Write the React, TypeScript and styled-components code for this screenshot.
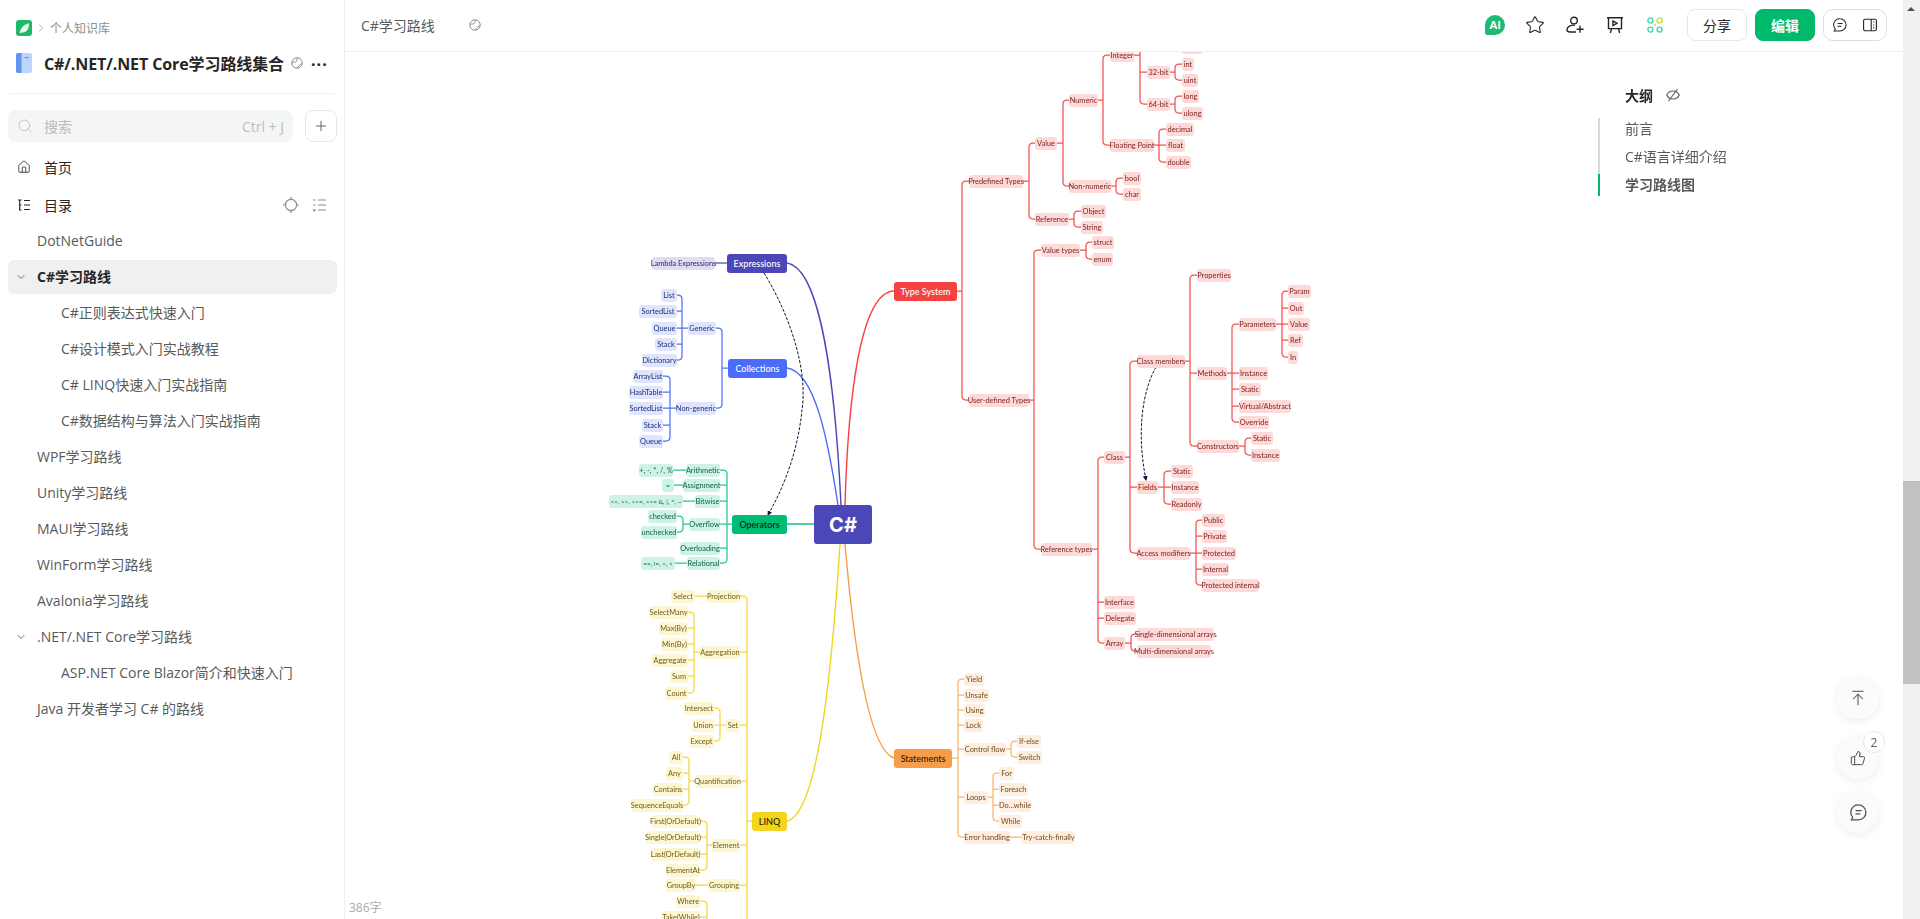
import React from "react"
import styled, { createGlobalStyle } from "styled-components"
import { ArrowUpToLine, ChevronDown, ChevronRight, House, Plus, Search, Star, ThumbsUp } from "lucide-react"

const GlobalStyle = createGlobalStyle`
  html, body {
    margin: 0;
    height: 100%;
    overflow: hidden;
    background: #fff;
    font-family: "Open Sans", "Noto Sans CJK SC", sans-serif;
  }
  #root { height: 100%; }
`

const Page = styled.div`
  display: flex;
  width: 1920px;
  height: 919px;
  overflow: hidden;
`

const Sidebar = styled.aside`
  flex: 0 0 345px;
  box-sizing: border-box;
  border-right: 1px solid #eff0f0;
  padding: 0 7px 0 8px;
  display: flex;
  flex-direction: column;
`

const Crumbs = styled.div`
  display: flex;
  align-items: center;
  height: 16px;
  margin: 20px 0 0 8px;
  font-size: 12px;
  color: #8a8f8d;
  gap: 3px;
`

const TitleRow = styled.div`
  display: flex;
  align-items: center;
  margin: 15px 0 0 8px;
  height: 24px;
`

const BookTitle = styled.div`
  font-size: 16px;
  font-weight: 700;
  color: #262626;
  margin-left: 12px;
  white-space: nowrap;
  letter-spacing: -0.1px;
`

const TitleScope = styled.span`
  margin-left: 7px;
  display: flex;
`

const TitleDots = styled.div`
  margin-left: 8px;
  font-size: 16px;
  font-weight: 700;
  letter-spacing: 1px;
  color: #262626;
  line-height: 16px;
  transform: translateY(-3px);
`

const Divider = styled.div`
  height: 1px;
  background: #eff0f0;
  margin: 18px 2px 0 2px;
`

const SearchRow = styled.div`
  display: flex;
  gap: 12px;
  margin-top: 16px;
`

const SearchBox = styled.div`
  flex: 0 0 285px;
  height: 32px;
  box-sizing: border-box;
  background: #f4f5f5;
  border-radius: 8px;
  display: flex;
  align-items: center;
  padding: 0 9px;
  color: #bbbfbd;
  font-size: 14px;
`

const SearchLabel = styled.span`
  margin-left: 11px;
  flex: 1;
  color: #b8bbba;
`

const AddButton = styled.button`
  flex: 0 0 32px;
  height: 32px;
  padding: 0;
  background: #fff;
  border: 1px solid #e7e9e8;
  border-radius: 8px;
  color: #585a5a;
  display: flex;
  align-items: center;
  justify-content: center;
`

const NavRow = styled.div<{ $top: number }>`
  display: flex;
  align-items: center;
  height: 36px;
  margin-top: ${(p) => p.$top}px;
  padding: 0 9px;
  color: #262626;
  font-size: 14px;
  gap: 13px;
`

const NavTools = styled.div`
  margin-left: auto;
  display: flex;
  align-items: center;
  gap: 13px;
  color: #8a8f8d;
  margin-right: 1px;
`

const TreeList = styled.div`
  display: flex;
  flex-direction: column;
`

const TreeRow = styled.div<{ $level: number; $active?: boolean }>`
  position: relative;
  height: 34px;
  margin: 1px 0;
  box-sizing: border-box;
  padding: 0 0 2px ${(p) => (p.$level === 2 ? 53 : 29)}px;
  display: flex;
  align-items: center;
  font-size: 14px;
  color: ${(p) => (p.$active ? "#262626" : "#585a5a")};
  font-weight: ${(p) => (p.$active ? 700 : 400)};
  background: ${(p) => (p.$active ? "#eff0f0" : "transparent")};
  border-radius: 6px;
  white-space: nowrap;
`

const Caret = styled.span`
  position: absolute;
  left: 7px;
  top: 11px;
  display: flex;
  color: #3d3f3f;
`

const Main = styled.main`
  flex: 1;
  min-width: 0;
  display: flex;
  flex-direction: column;
`

const Header = styled.header`
  flex: 0 0 52px;
  box-sizing: border-box;
  border-bottom: 1px solid #eff0f0;
  display: flex;
  align-items: center;
  padding: 0 16px 1px 16px;
  background: #fff;
  position: relative;
  z-index: 2;
`

const DocName = styled.div`
  font-size: 14px;
  color: #585a5a;
  margin-right: 34px;
`

const HeaderIcons = styled.div`
  margin-left: auto;
  display: flex;
  align-items: center;
  gap: 20px;
  margin-right: 22px;
  color: #262626;
`

const IconSlot = styled.span`
  width: 20px;
  height: 20px;
  display: flex;
  align-items: center;
  justify-content: center;
`

const HeaderButton = styled.button<{ $primary?: boolean }>`
  width: 60px;
  height: 32px;
  box-sizing: border-box;
  padding: 0;
  border-radius: 8px;
  margin-right: 8px;
  font-family: inherit;
  font-size: 14px;
  font-weight: ${(p) => (p.$primary ? 700 : 400)};
  color: ${(p) => (p.$primary ? "#fff" : "#262626")};
  background: ${(p) => (p.$primary ? "#00b96b" : "#fff")};
  border: 1px solid ${(p) => (p.$primary ? "#00b96b" : "#e7e9e8")};
`

const ButtonGroup = styled.div`
  width: 64px;
  height: 32px;
  box-sizing: border-box;
  border: 1px solid #dcdede;
  border-radius: 10px;
  display: flex;
  align-items: center;
  justify-content: space-between;
  padding: 0 9px;
  color: #262626;
`

const Content = styled.div`
  flex: 1;
  position: relative;
  overflow: hidden;
`

const MapLayer = styled.div`
  position: absolute;
  left: -345px;
  top: -52px;
  width: 1920px;
  height: 1100px;
  filter: blur(0.3px);
`

const MapLines = styled.svg`
  position: absolute;
  left: 0;
  top: 0;
`

type Tone = "indigo" | "blue" | "green" | "yellow" | "orange" | "red"

const tones: Record<Tone, { bg: string; ink: string; line: string }> = {
  indigo: { bg: "#dfdef1", ink: "#2a2670", line: "#4c47b9" },
  blue: { bg: "#dfe5fd", ink: "#1c2d78", line: "#4f71f8" },
  green: { bg: "#cdf3e4", ink: "#0f5f42", line: "#22c98d" },
  yellow: { bg: "#fdf6d3", ink: "#6e6015", line: "#f6d83a" },
  orange: { bg: "#fdeedf", ink: "#6e4b1f", line: "#f8b46c" },
  red: { bg: "#fdd9d8", ink: "#7d2222", line: "#f5504e" },
}

const MapNode = styled.div<{ $tone: Tone; $tight?: boolean }>`
  position: absolute;
  box-sizing: border-box;
  display: flex;
  align-items: center;
  justify-content: center;
  height: 13px;
  margin-top: -6.5px;
  border-radius: 3px;
  font-family: "Lato", sans-serif;
  font-size: ${(p) => (p.$tight ? 6.4 : 7.4)}px;
  white-space: nowrap;
  background: ${(p) => tones[p.$tone].bg};
  color: ${(p) => tones[p.$tone].ink};
`

const BranchNode = styled.div<{ $bg: string; $ink: string }>`
  position: absolute;
  display: flex;
  align-items: center;
  justify-content: center;
  height: 19px;
  margin-top: -9.5px;
  border-radius: 3px;
  font-family: "Lato", sans-serif;
  font-size: 9px;
  font-weight: 500;
  background: ${(p) => p.$bg};
  color: ${(p) => p.$ink};
`

const RootNode = styled.div`
  position: absolute;
  left: 814px;
  top: 505px;
  width: 58px;
  height: 39px;
  border-radius: 3px;
  background: #4c47b9;
  color: #fff;
  font-family: "Inter", sans-serif;
  font-size: 20px;
  font-weight: 700;
  display: flex;
  align-items: center;
  justify-content: center;
`

const WordCount = styled.div`
  position: absolute;
  left: 4px;
  bottom: 3px;
  font-size: 12px;
  color: #a8abaa;
  background: #fff;
`

const Outline = styled.nav`
  position: absolute;
  left: 1253px;
  top: 33px;
  width: 200px;
`

const OutlineHead = styled.div`
  display: flex;
  align-items: center;
  gap: 13px;
  margin-left: 27px;
  height: 20px;
  font-size: 14px;
  font-weight: 700;
  color: #262626;
`

const OutlineList = styled.div`
  margin-top: 13px;
  display: flex;
  flex-direction: column;
  gap: 6px;
  border-left: 2px solid #d8dad9;
`

const OutlineItem = styled.div<{ $active?: boolean }>`
  height: 22px;
  box-sizing: border-box;
  margin-left: -2px;
  padding: 0 0 2px 25px;
  display: flex;
  align-items: center;
  font-size: 14px;
  color: #585a5a;
  font-weight: ${(p) => (p.$active ? 600 : 400)};
  border-left: 2px solid ${(p) => (p.$active ? "#00b96b" : "transparent")};
`

const FloatStack = styled.div`
  position: absolute;
  left: 1492px;
  top: 625px;
  display: flex;
  flex-direction: column;
`

const FloatButton = styled.div<{ $gap: number }>`
  position: relative;
  width: 42px;
  height: 42px;
  margin-bottom: ${(p) => p.$gap}px;
  border-radius: 50%;
  background: #fbfbfb;
  box-shadow: 0 2px 10px rgba(0, 0, 0, 0.08);
  display: flex;
  align-items: center;
  justify-content: center;
  color: #4f5151;
`

const Badge = styled.span`
  position: absolute;
  left: 26px;
  top: -6px;
  width: 22px;
  height: 22px;
  box-sizing: border-box;
  border-radius: 50%;
  border: 1px solid #e7e9e8;
  background: #fff;
  display: flex;
  align-items: center;
  justify-content: center;
  font-size: 12px;
  color: #585a5a;
`

const Scrollbar = styled.div`
  flex: 0 0 17px;
  position: relative;
  background: #f1f1f1;
`

const ScrollArrow = styled.div`
  position: absolute;
  left: 4px;
  top: 7px;
  width: 0;
  height: 0;
  border-left: 4px solid transparent;
  border-right: 4px solid transparent;
  border-bottom: 4px solid #505050;
`

const ScrollThumb = styled.div`
  position: absolute;
  left: 0;
  top: 481px;
  width: 17px;
  height: 203px;
  background: #c1c1c1;
`

// mind map data, coordinates read off the picture: x0, x1 and centre y
type MapItem = { t: string; x0: number; x1: number; y: number; s?: number; kids?: MapItem[] }

const n = (t: string, x0: number, x1: number, y: number, s?: number, kids?: MapItem[]): MapItem => ({ t, x0, x1, y, s, kids })

const expressions = n("Expressions", 727, 787, 263, 0, [n("Lambda Expressions", 652, 715, 263)])

const collections = n("Collections", 728, 787, 368, 722, [
  n("Generic", 688, 716, 328, 682, [
    n("List", 661, 677, 295),
    n("SortedList", 639, 677, 311),
    n("Queue", 652, 677, 328),
    n("Stack", 655, 677, 344),
    n("Dictionary", 642, 677, 360),
  ]),
  n("Non-generic", 676, 716, 408, 670, [
    n("ArrayList", 633, 663, 376),
    n("HashTable", 629, 663, 392),
    n("SortedList", 629, 663, 408),
    n("Stack", 642, 663, 425),
    n("Queue", 639, 663, 441),
  ]),
])

const operators = n("Operators", 732, 787, 524, 727, [
  n("Arithmetic", 686, 720, 470, 0, [n("+, -, *, /, %", 639, 673, 470)]),
  n("Assignment", 683, 720, 485, 0, [n("=", 662, 674, 485)]),
  n("Bitwise", 695, 720, 501, 0, [n("<<, >>, <<=, >>= &, |, ^, ~", 609, 683, 501)]),
  n("Overflow", 689, 720, 524, 683, [n("checked", 648, 677, 516), n("unchecked", 641, 677, 532)]),
  n("Overloading", 680, 720, 548),
  n("Relational", 687, 720, 563, 0, [n("==, !=, >, <", 641, 675, 563)]),
])

const linq = n("LINQ", 752, 787, 821, 747, [
  n("Projection", 707, 740, 596, 0, [n("Select", 671, 695, 596)]),
  n("Aggregation", 700, 740, 652, 694, [
    n("SelectMany", 649, 688, 612),
    n("Max(By)", 659, 688, 628),
    n("Min(By)", 661, 688, 644),
    n("Aggregate", 652, 688, 660),
    n("Sum", 670, 688, 676),
    n("Count", 665, 688, 693),
  ]),
  n("Set", 726, 740, 725, 720, [n("Intersect", 684, 714, 708), n("Union", 692, 714, 725), n("Except", 689, 714, 741)]),
  n("Quantification", 695, 740, 781, 689, [
    n("All", 669, 683, 757),
    n("Any", 666, 683, 773),
    n("Contains", 653, 683, 789),
    n("SequenceEquals", 631, 683, 805),
  ]),
  n("Element", 712, 740, 845, 707, [
    n("First(OrDefault)", 651, 700, 821),
    n("Single(OrDefault)", 646, 700, 837),
    n("Last(OrDefault)", 651, 700, 854),
    n("ElementAt", 666, 700, 870),
  ]),
  n("Grouping", 708, 740, 885, 0, [n("GroupBy", 666, 696, 885)]),
  n("Filtering", 712, 740, 950, 707, [n("Where", 676, 700, 901), n("Take(While)", 662, 700, 917), n("Skip(While)", 664, 700, 933)]),
  n("Ordering", 710, 740, 1060),
])

const statements = n("Statements", 894, 952, 758, 958, [
  n("Yield", 964, 984, 679),
  n("Unsafe", 964, 989, 695),
  n("Using", 964, 985, 710),
  n("Lock", 964, 983, 725),
  n("Control flow", 964, 1006, 749, 1011, [n("If-else", 1017, 1041, 741), n("Switch", 1017, 1042, 757)]),
  n("Loops", 964, 988, 797, 993, [
    n("For", 999, 1014, 773),
    n("Foreach", 999, 1028, 789),
    n("Do...while", 999, 1031, 805),
    n("While", 999, 1022, 821),
  ]),
  n("Error handling", 964, 1010, 837, 0, [n("Try-catch-finally", 1022, 1075, 837)]),
])

const typeSystem = n("Type System", 894, 957, 291, 962, [
  n("Predefined Types", 969, 1023, 181, 1029, [
    n("Value", 1035, 1057, 143, 1063, [
      n("Numeric", 1069, 1098, 100, 1103, [
        n("Integer", 1110, 1134, 55, 1140, [
          n("16-bit", 1147, 1170, 40, 1175, [n("short", 1182, 1201, 30), n("ushort", 1182, 1203, 47)]),
          n("32-bit", 1147, 1170, 72, 1175, [n("int", 1182, 1194, 64), n("uint", 1182, 1198, 80)]),
          n("64-bit", 1147, 1170, 104, 1175, [n("long", 1182, 1199, 96), n("ulong", 1182, 1203, 113)]),
        ]),
        n("Floating Point", 1110, 1154, 145, 1159, [n("decimal", 1166, 1194, 129), n("float", 1166, 1185, 145), n("double", 1166, 1191, 162)]),
      ]),
      n("Non-numeric", 1069, 1111, 186, 1116, [n("bool", 1123, 1141, 178), n("char", 1123, 1141, 194)]),
    ]),
    n("Reference", 1035, 1069, 219, 1074, [n("Object", 1081, 1106, 211), n("String", 1081, 1103, 227)]),
  ]),
  n("User-defined Types", 969, 1029, 400, 1034, [
    n("Value types", 1041, 1080, 250, 1086, [n("struct", 1092, 1114, 242), n("enum", 1092, 1113, 259)]),
    n("Reference types", 1041, 1092, 549, 1098, [
      n("Class", 1104, 1125, 457, 1130, [
        n("Class members", 1137, 1185, 361, 1190, [
          n("Properties", 1197, 1231, 275),
          n("Methods", 1197, 1227, 373, 1232, [
            n("Parameters", 1239, 1276, 324, 1282, [
              n("Param", 1288, 1311, 291),
              n("Out", 1288, 1304, 308),
              n("Value", 1288, 1310, 324),
              n("Ref", 1288, 1303, 340),
              n("In", 1288, 1298, 357),
            ]),
            n("Instance", 1239, 1268, 373),
            n("Static", 1239, 1261, 389),
            n("Virtual/Abstract", 1239, 1291, 406),
            n("Override", 1239, 1269, 422),
          ]),
          n("Constructors", 1197, 1239, 446, 1245, [n("Static", 1251, 1273, 438), n("Instance", 1251, 1280, 455)]),
        ]),
        n("Fields", 1137, 1158, 487, 1164, [n("Static", 1171, 1193, 471), n("Instance", 1171, 1199, 487), n("Readonly", 1171, 1202, 504)]),
        n("Access modifiers", 1137, 1190, 553, 1196, [
          n("Public", 1202, 1225, 520),
          n("Private", 1202, 1227, 536),
          n("Protected", 1202, 1236, 553),
          n("Internal", 1202, 1229, 569),
          n("Protected internal", 1202, 1259, 585),
        ]),
      ]),
      n("Interface", 1104, 1135, 602),
      n("Delegate", 1104, 1136, 618),
      n("Array", 1104, 1125, 643, 1131, [n("Single-dimensional arrays", 1137, 1214, 634), n("Multi-dimensional arrays", 1137, 1211, 651)]),
    ]),
  ]),
])

const branches: { tree: MapItem; tone: Tone; bg: string; ink: string; curve: string }[] = [
  { tree: expressions, tone: "indigo", bg: "#4c47b9", ink: "#fff", curve: "M787 263C820 268 835 380 841 505" },
  { tree: collections, tone: "blue", bg: "#4a6cf7", ink: "#fff", curve: "M787 368C815 372 828 440 838 505" },
  { tree: operators, tone: "green", bg: "#00bd75", ink: "#06231a", curve: "M787 524H814" },
  { tree: linq, tone: "yellow", bg: "#f3d41e", ink: "#2a2505", curve: "M787 821C815 815 830 700 840 544" },
  { tree: statements, tone: "orange", bg: "#f79d48", ink: "#2a1a06", curve: "M894 758C870 750 855 660 845 544" },
  { tree: typeSystem, tone: "red", bg: "#f5413f", ink: "#fff", curve: "M894 291C860 292 848 400 845 505" },
]

const linkPath = (node: MapItem): string => {
  const kids = node.kids ?? []
  if (!kids.length) return ""
  const dir = kids[0].x0 >= node.x1 ? 1 : -1
  const from = dir > 0 ? node.x1 : node.x0
  const edge = (k: MapItem) => (dir > 0 ? k.x0 : k.x1)
  let d = ""
  if (kids.length === 1 && !node.s) {
    d = `M${from} ${node.y}H${edge(kids[0])}`
  } else {
    const s = node.s as number
    const ys = kids.map((k) => k.y)
    const top = Math.min(...ys)
    const bottom = Math.max(...ys)
    const r = 4
    d = `M${from} ${node.y}H${s}M${s} ${top + r}V${bottom - r}`
    kids.forEach((k) => {
      const e = edge(k)
      if (k.y === top) d += `M${e} ${k.y}H${s + dir * r}Q${s} ${k.y} ${s} ${k.y + r}`
      else if (k.y === bottom) d += `M${e} ${k.y}H${s + dir * r}Q${s} ${k.y} ${s} ${k.y - r}`
      else d += `M${e} ${k.y}H${s}`
    })
  }
  return d + kids.map(linkPath).join("")
}

const flatten = (node: MapItem): MapItem[] => (node.kids ?? []).flatMap((k) => [k, ...flatten(k)])

// branches run past the top and bottom of the viewport, only their lines show there
const inView = (k: MapItem) => k.y > 44 && k.y < 925

const MindMap = () => (
  <MapLayer>
    <MapLines width="1920" height="1100" viewBox="0 0 1920 1100" fill="none">
      <defs>
        <marker id="arrow" markerWidth="5" markerHeight="5" refX="4" refY="2.5" orient="auto">
          <path d="M0 0L5 2.5L0 5z" fill="#10123a" />
        </marker>
      </defs>
      {branches.map((b) => (
        <g key={b.tree.t}>
          <path d={linkPath(b.tree)} stroke={tones[b.tone].line} strokeWidth="1.25" />
          <path d={b.curve} stroke={b.bg} strokeWidth="1.4" />
        </g>
      ))}
      <g stroke="#10123a" strokeWidth="1" strokeDasharray="3 1.5">
        <path d="M764 273C790 315 808 370 802 410C798 450 785 485 768 515" markerEnd="url(#arrow)" />
        <path d="M1156 367C1143 390 1136 430 1146 480" markerEnd="url(#arrow)" />
      </g>
    </MapLines>
    {branches.map((b) => (
      <React.Fragment key={b.tree.t}>
        <BranchNode $bg={b.bg} $ink={b.ink} style={{ left: b.tree.x0, top: b.tree.y, width: b.tree.x1 - b.tree.x0 }}>
          {b.tree.t}
        </BranchNode>
        {flatten(b.tree)
          .filter(inView)
          .map((k) => (
            <MapNode
              key={`${k.t}-${k.x0}-${k.y}`}
              $tone={b.tone}
              $tight={k.t.startsWith("<<") || k.t.startsWith("==")}
              style={{ left: k.x0, top: k.y, width: k.x1 - k.x0 }}
            >
              {k.t}
            </MapNode>
          ))}
      </React.Fragment>
    ))}
    <RootNode>C#</RootNode>
  </MapLayer>
)

const LogoIcon = () => (
  <svg width="16" height="16" viewBox="0 0 16 16">
    <rect width="16" height="16" rx="3" fill="#1fb866" />
    <path d="M3.5 13C4.5 8 8 4 13 3.2C13.3 8 11 12.4 6.8 12.4C5.6 12.4 4.4 12.6 3.5 13z" fill="#eaf7ef" />
  </svg>
)

const BookIcon = () => (
  <svg width="16" height="20" viewBox="0 0 16 20" style={{ flex: "none" }}>
    <rect width="16" height="20" rx="2" fill="#bcd6fb" />
    <path d="M2 0H5.5V20H2A2 2 0 0 1 0 18V2A2 2 0 0 1 2 0z" fill="#5f97ee" />
    <rect x="8.5" y="4" width="4.5" height="1.2" fill="#5f97ee" />
  </svg>
)

const ScopeIcon = () => (
  <svg width="12" height="12" viewBox="0 0 12 12" fill="none" stroke="#8a8f8d" strokeWidth="1" style={{ flex: "none" }}>
    <circle cx="6" cy="6" r="5.2" />
    <path d="M1.2 6.5C2.5 3.6 4.4 6 5.6 4.2C6.2 3.2 5.6 2 6.6 1M6 11C6.6 9.4 7.8 9.8 8.2 8.4C8.6 7.2 9.8 7.2 10.8 7" />
  </svg>
)

const TocIcon = () => (
  <svg width="14" height="14" viewBox="0 0 14 14" fill="none" stroke="#262626" strokeWidth="1.2" style={{ flex: "none" }}>
    <path d="M1 2H4.5M2.7 2V12H4.5M7 2.5H13M7 7H13M7 11.5H13M2.7 7H4.5" />
  </svg>
)

const CrosshairIcon = () => (
  <svg width="16" height="16" viewBox="0 0 16 16" fill="none" stroke="#8a8f8d" strokeWidth="1.2">
    <circle cx="8" cy="8" r="5.6" />
    <path d="M8 0V3.2M8 12.8V16M0 8H3.2M12.8 8H16" />
  </svg>
)

const CollapseIcon = () => (
  <svg width="15" height="14" viewBox="0 0 15 14" fill="none" stroke="#8a8f8d" strokeWidth="1.2">
    <path d="M6 2H14M6 7H14M6 12H14M1 2H3.5M1 11.5L2.2 13L3.5 11.5M1 7H3.5" />
  </svg>
)

const AiIcon = () => (
  <svg width="20" height="20" viewBox="0 0 20 20">
    <path d="M10 0A10 10 0 1 1 10 20H2.5A2.5 2.5 0 0 1 0 17.5V10A10 10 0 0 1 10 0z" fill="#1fbb74" />
    <text x="10" y="14.3" textAnchor="middle" fontFamily="Liberation Sans, sans-serif" fontWeight="700" fontSize="11.5" fill="#fff">
      AI
    </text>
  </svg>
)

const InviteIcon = () => (
  <svg width="18" height="18" viewBox="0 0 18 18" fill="none" stroke="#262626" strokeWidth="1.4">
    <circle cx="8" cy="4.6" r="3.3" />
    <path d="M9 9.2C5 8.8 1 10.6 1 13.4C1 15.4 2.6 16 4 16H10M14 9.6V16.8M10.6 13.2H17.6" />
  </svg>
)

const PresentIcon = () => (
  <svg width="18" height="18" viewBox="0 0 18 18" fill="none" stroke="#262626" strokeWidth="1.4">
    <path d="M1 1.7H17M2.5 1.7V12.6H15.5V1.7M5.5 12.6L4.4 17M12.5 12.6L13.6 17" />
    <path d="M7 5V9.6L11 7.3z" />
  </svg>
)

const AppsIcon = () => (
  <svg width="16" height="16" viewBox="0 0 16 16" fill="none" strokeWidth="1.4">
    <circle cx="3.4" cy="3.4" r="2.5" stroke="#3fd6b0" />
    <circle cx="12.6" cy="3.4" r="2.5" stroke="#c6e02f" />
    <circle cx="3.4" cy="12.6" r="2.5" stroke="#3fd6b0" />
    <circle cx="12.6" cy="12.6" r="2.5" stroke="#3fd6b0" />
    <circle cx="8" cy="8" r="1" fill="#c6e02f" stroke="none" />
  </svg>
)

const CommentIcon = ({ size = 14 }: { size?: number }) => (
  <svg width={size} height={size} viewBox="0 0 14 14" fill="none" stroke="currentColor" strokeWidth="1.05">
    <path d="M7 .8A6.1 6.1 0 1 1 7 13H1.2L2.3 11A6.1 6.1 0 0 1 7 .8z" />
    <path d="M4.6 5.5H9.6M4.6 8.2H8.4" />
  </svg>
)

const PanelIcon = () => (
  <svg width="14" height="14" viewBox="0 0 14 14" fill="none" stroke="#262626" strokeWidth="1.1">
    <rect x=".6" y="1.2" width="12.8" height="11.6" rx="1.6" />
    <path d="M8.2 1.2V12.8" />
    <path d="M10.8 3.5V4.6M10.8 6.4V7.5M10.8 9.3V10.4" />
  </svg>
)

const EyeOffIcon = () => (
  <svg width="14" height="14" viewBox="0 0 14 14" fill="none" stroke="#585a5a" strokeWidth="1.1">
    <path d="M.7 7C2 4.4 4.3 3 7 3S12 4.4 13.3 7C12 9.6 9.7 11 7 11S2 9.6.7 7z" />
    <path d="M11.5 1L2.6 13" />
  </svg>
)

const treeRows: { t: string; level: number; caret?: boolean; active?: boolean }[] = [
  { t: "DotNetGuide", level: 1 },
  { t: "C#学习路线", level: 1, caret: true, active: true },
  { t: "C#正则表达式快速入门", level: 2 },
  { t: "C#设计模式入门实战教程", level: 2 },
  { t: "C# LINQ快速入门实战指南", level: 2 },
  { t: "C#数据结构与算法入门实战指南", level: 2 },
  { t: "WPF学习路线", level: 1 },
  { t: "Unity学习路线", level: 1 },
  { t: "MAUI学习路线", level: 1 },
  { t: "WinForm学习路线", level: 1 },
  { t: "Avalonia学习路线", level: 1 },
  { t: ".NET/.NET Core学习路线", level: 1, caret: true },
  { t: "ASP.NET Core Blazor简介和快速入门", level: 2 },
  { t: "Java 开发者学习 C# 的路线", level: 1 },
]

export default function App() {
  return (
    <Page>
      <GlobalStyle />
      <Sidebar>
        <Crumbs>
          <LogoIcon />
          <ChevronRight size={12} strokeWidth={1.5} color="#8a8f8d" />
          <span>个人知识库</span>
        </Crumbs>
        <TitleRow>
          <BookIcon />
          <BookTitle>C#/.NET/.NET Core学习路线集合</BookTitle>
          <TitleScope>
            <ScopeIcon />
          </TitleScope>
          <TitleDots>...</TitleDots>
        </TitleRow>
        <Divider />
        <SearchRow>
          <SearchBox>
            <Search size={16} strokeWidth={1.3} />
            <SearchLabel>搜索</SearchLabel>
            <span>Ctrl + J</span>
          </SearchBox>
          <AddButton>
            <Plus size={16} strokeWidth={1.4} />
          </AddButton>
        </SearchRow>
        <NavRow $top={7}>
          <House size={14} strokeWidth={1.4} />
          <span>首页</span>
        </NavRow>
        <NavRow $top={2}>
          <TocIcon />
          <span>目录</span>
          <NavTools>
            <CrosshairIcon />
            <CollapseIcon />
          </NavTools>
        </NavRow>
        <TreeList>
          {treeRows.map((r) => (
            <TreeRow key={r.t} $level={r.level} $active={r.active}>
              {r.caret && (
                <Caret>
                  <ChevronDown size={12} strokeWidth={1.5} />
                </Caret>
              )}
              {r.t}
            </TreeRow>
          ))}
        </TreeList>
      </Sidebar>
      <Main>
        <Header>
          <DocName>C#学习路线</DocName>
          <ScopeIcon />
          <HeaderIcons>
            <IconSlot>
              <AiIcon />
            </IconSlot>
            <IconSlot>
              <Star size={20} strokeWidth={1.3} />
            </IconSlot>
            <IconSlot>
              <InviteIcon />
            </IconSlot>
            <IconSlot>
              <PresentIcon />
            </IconSlot>
            <IconSlot>
              <AppsIcon />
            </IconSlot>
          </HeaderIcons>
          <HeaderButton>分享</HeaderButton>
          <HeaderButton $primary>编辑</HeaderButton>
          <ButtonGroup>
            <CommentIcon />
            <PanelIcon />
          </ButtonGroup>
        </Header>
        <Content>
          <MindMap />
          <WordCount>386字</WordCount>
          <Outline>
            <OutlineHead>
              <span>大纲</span>
              <EyeOffIcon />
            </OutlineHead>
            <OutlineList>
              <OutlineItem>前言</OutlineItem>
              <OutlineItem>C#语言详细介绍</OutlineItem>
              <OutlineItem $active>学习路线图</OutlineItem>
            </OutlineList>
          </Outline>
          <FloatStack>
            <FloatButton $gap={18}>
              <ArrowUpToLine size={18} strokeWidth={1.4} />
            </FloatButton>
            <FloatButton $gap={12}>
              <ThumbsUp size={16} strokeWidth={1.5} />
              <Badge>2</Badge>
            </FloatButton>
            <FloatButton $gap={0}>
              <CommentIcon size={17} />
            </FloatButton>
          </FloatStack>
        </Content>
      </Main>
      <Scrollbar>
        <ScrollArrow />
        <ScrollThumb />
      </Scrollbar>
    </Page>
  )
}
